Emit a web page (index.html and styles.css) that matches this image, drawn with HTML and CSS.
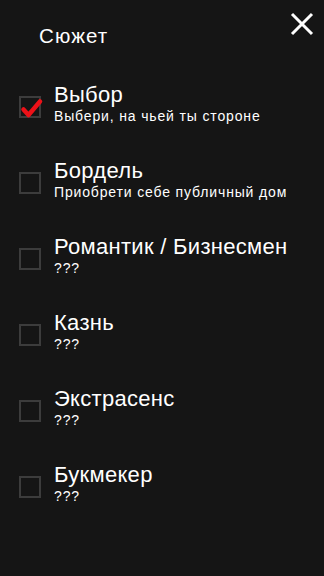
FILE: index.html
```html
<!DOCTYPE html>
<html lang="ru">
<head>
<meta charset="utf-8">
<link rel="stylesheet" href="styles.css">
</head>
<body>
<div class="screen">
  <header class="header">
    <h1 class="heading">Сюжет</h1>
    <button class="close" aria-label="Закрыть">
      <svg width="24" height="24" viewBox="0 0 24 24"><path d="M2 2L22 22M22 2L2 22" stroke="#fff" stroke-width="3" fill="none"/></svg>
    </button>
  </header>
  <ul class="list">
    <li class="item">
      <span class="box checked">
        <svg class="tick" width="22" height="22" viewBox="0 0 22 22"><path d="M4.5 13.5L9.5 19L21 5.5" stroke="#ec1118" stroke-width="4.5" fill="none" stroke-linecap="round" stroke-linejoin="round"/></svg>
      </span>
      <div class="text"><div class="title">Выбор</div><div class="sub">Выбери, на чьей ты стороне</div></div>
    </li>
    <li class="item">
      <span class="box"></span>
      <div class="text"><div class="title">Бордель</div><div class="sub">Приобрети себе публичный дом</div></div>
    </li>
    <li class="item">
      <span class="box"></span>
      <div class="text"><div class="title">Романтик / Бизнесмен</div><div class="sub">???</div></div>
    </li>
    <li class="item">
      <span class="box"></span>
      <div class="text"><div class="title">Казнь</div><div class="sub">???</div></div>
    </li>
    <li class="item">
      <span class="box"></span>
      <div class="text"><div class="title">Экстрасенс</div><div class="sub">???</div></div>
    </li>
    <li class="item">
      <span class="box"></span>
      <div class="text"><div class="title">Букмекер</div><div class="sub">???</div></div>
    </li>
  </ul>
</div>
</body>
</html>
```
FILE: styles.css
```css
html, body {
  margin: 0;
  padding: 0;
  background: #151515;
}
.screen {
  width: 324px;
  height: 576px;
  background: #151515;
  color: #fff;
  font-family: "Liberation Sans", Arial, sans-serif;
  overflow: hidden;
}
.header {
  display: flex;
  justify-content: space-between;
  align-items: flex-start;
  padding: 12px 10px 0 39px;
  height: 71px;
  box-sizing: border-box;
}
.heading {
  margin: 12px 0 0 0;
  font-size: 20.5px;
  font-weight: normal;
  line-height: 23px;
  letter-spacing: 1.1px;
}
.close {
  background: none;
  border: none;
  padding: 0;
  width: 24px;
  height: 24px;
  cursor: pointer;
}
.close svg { display: block; }
.list {
  list-style: none;
  margin: 0;
  padding: 0;
}
.item {
  display: flex;
  align-items: flex-start;
  height: 76px;
  padding-left: 19px;
  box-sizing: border-box;
}
.box {
  position: relative;
  flex: none;
  width: 22px;
  height: 22px;
  box-sizing: border-box;
  border: 2px solid #3c3c3c;
  margin-top: 25px;
}
.tick {
  position: absolute;
  left: -2px;
  top: -2px;
  overflow: visible;
}
.text {
  margin-left: 13px;
  padding-top: 12px;
}
.title {
  font-size: 22px;
  line-height: 24px;
  letter-spacing: 0.3px;
}
.sub {
  font-size: 14px;
  line-height: 15px;
  letter-spacing: 0.85px;
  margin-top: 2px;
}
```
